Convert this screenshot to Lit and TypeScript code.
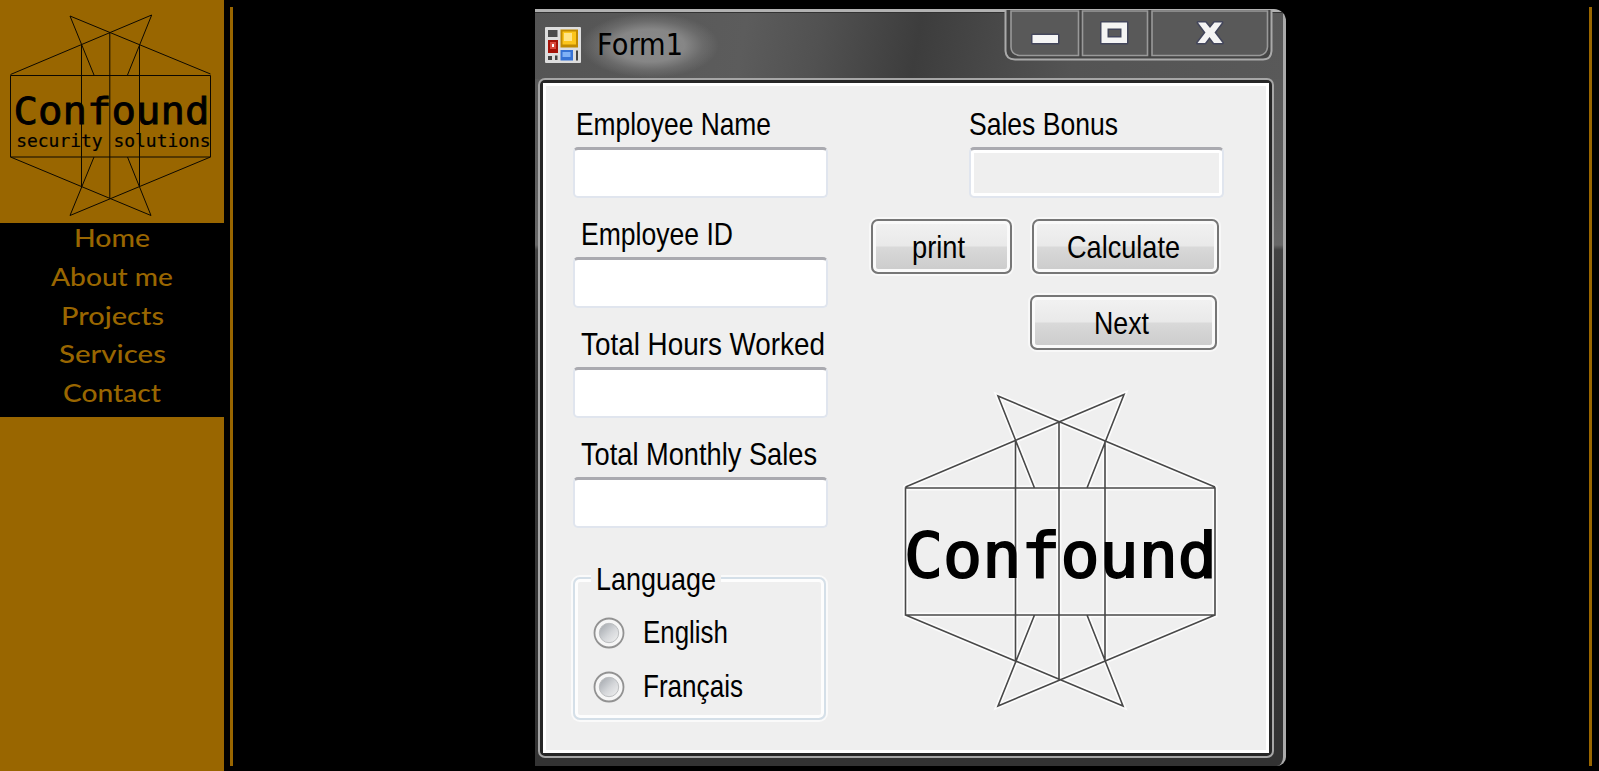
import { LitElement, html, css } from "lit";
import { customElement, property } from "lit/decorators.js";

/** One line of text stretched to a fixed advance width. */
@customElement("fit-text")
class FitText extends LitElement {
  @property() text = "";
  @property({ type: Number }) width = 100;
  @property({ type: Number }) height = 38.8;
  @property({ type: Number }) base = 23;

  static styles = css`
    :host { display: block; }
    svg { display: block; overflow: visible; }
    text { fill: currentColor; }
  `;

  render() {
    return html`<svg width=${this.width} height=${this.height}>
      <text x="0" y=${this.base} textLength=${this.width} lengthAdjust="spacingAndGlyphs">${this.text}</text>
    </svg>`;
  }
}

@customElement("side-bar")
class SideBar extends LitElement {
  static styles = css`
    :host { display: block; width: 224px; height: 771px; background: #996600; }
    .logo { display: block; }
    .line { fill: none; stroke: #0c0800; stroke-width: 1; }
    .word { font: 38px "DejaVu Sans Mono", monospace; stroke: #000; stroke-width: 0.8; }
    .tag { font: 17px "DejaVu Sans Mono", monospace; stroke: #000; stroke-width: 0.2; }
    nav { display: flex; flex-direction: column; align-items: center; height: 194px; background: #000; }
    a { display: block; color: #996600; text-decoration: none; font: 500 24.500px Lato, sans-serif; }
  `;

  links = [
    { name: "Home", width: 76 },
    { name: "About me", width: 122 },
    { name: "Projects", width: 103 },
    { name: "Services", width: 107 },
    { name: "Contact", width: 98 },
  ];

  render() {
    return html`
      <svg class="logo" width="224" height="223" viewBox="0 0 224 223">
        <path class="line" d="M10.5 75.5H210.5V157H10.5Z M81.5 45V187 M109.8 32.5V198.5 M139.5 45V187
          M94 75 70 16 210.5 74 M127.5 75 151.7 15 10.5 74.500 M94 157 70 215.500 210.500 157 M127.500 157 151 215.500 10.500 157" />
        <text class="word" x="13.500" y="124" textLength="196" lengthAdjust="spacingAndGlyphs">Confound</text>
        <text class="tag" x="16.200" y="147" textLength="194.500" lengthAdjust="spacingAndGlyphs">security solutions</text>
      </svg>
      <nav>
        ${this.links.map((l) => html`<a href="#"><fit-text .text=${l.name} .width=${l.width} .base=${23.5}></fit-text></a>`)}
      </nav>
    `;
  }
}

@customElement("form-window")
class FormWindow extends LitElement {
  static styles = css`
    :host {
      display: block; box-sizing: border-box; width: 751px; height: 759px; padding-top: 2px;
      background: #000; font: 31.500px "Liberation Sans", Arial, sans-serif; color: #000;
    }
    .frame {
      box-sizing: border-box; height: 757px; border-top: 3px solid #b2b2b2; border-right: 3px solid #aaa;
      border-radius: 0 12px 9px 0;
      background: linear-gradient(#575757 0, #5e5e5e 160px, #686868 233px, #424242 238px, #353535 380px, #333 100%);
    }
    .title {
      display: flex; height: 67px; align-items: flex-start; box-sizing: border-box;
      border-top: 1px solid #333;
      background: linear-gradient(100deg, #545454 0, #5c5c5c 28%, #515151 38%, #3d3d3d 51%, #474747 60%, #545454 72%, #595959 100%);
    }
    .icon { display: block; margin: 14px 0 0 10px; }
    .caption {
      margin: 0; padding: 15px 36px 16px 16px; width: 86px; height: 34px;
      font: 29.500px "DejaVu Sans", sans-serif;
      background: radial-gradient(closest-side, #8a8a8a 0, #868686 50%, rgba(118,118,118,0.6) 76%, rgba(90,90,90,0) 100%);
    }
    .controls { display: block; margin-left: auto; margin-right: 9px; margin-top: -3px; }
    .client {
      box-sizing: border-box; width: 736px; height: 680px; margin-left: 3px; margin-top: -1px;
      border: 2.500px solid #a6a6a6; border-radius: 7px; background: #262626; padding: 3px;
    }
    .body {
      display: flex; justify-content: space-between; box-sizing: border-box; height: 670px; width: 726px;
      border: 3px solid #fff; padding: 19px 41px 0 27px; background: #efefef;
    }
    .left { width: 255px; }
    .right { width: 354px; }
    .field { margin-bottom: 17px; width: 255px; }
    .field.bonus { margin-left: 98px; margin-bottom: 21px; }
    .label { display: block; padding-left: 3px; }
    .label.inset { padding-left: 8px; }
    .label.flush { padding-left: 0; }
    .box {
      display: block; box-sizing: border-box; width: 255px; height: 51px; border: 2px solid #e0e5ee;
      border-top: 3px solid #aaaab0; border-radius: 5px; background: #fff;
    }
    .box.locked { background: #efefef; box-shadow: inset 0 0 0 3px #fff; }
    .buttons { display: flex; justify-content: space-between; width: 348px; margin-bottom: 21px; }
    .btn {
      display: flex; justify-content: center; box-sizing: border-box; height: 55px; padding: 5px 0 0 0; width: 187px;
      border: 2.500px solid #767676; border-radius: 7px; box-shadow: inset 0 0 0 3px #fafafa, 0 0 0 2px #f8f8f8;
      background: linear-gradient(#f1f1f1 3px, #e9e9e9 49%, #d9d9d9 51%, #cbcbcb 100%);
    }
    .btn.small { width: 141px; padding-right: 7px; }
    .btn:nth-child(2) { padding-right: 5px; }
    .btn.next { margin-left: 159px; padding-right: 4px; }
    .mark { display: block; margin: 39px 0 0 24px; }
    .line { fill: none; stroke: #484848; stroke-width: 1.600; }
    .halo { fill: none; stroke: #fcfcfc; stroke-width: 5; }
    .word { font: 62px "DejaVu Sans Mono", monospace; stroke: #000; stroke-width: 1.800; }
    .group {
      box-sizing: border-box; width: 253px; height: 143px; margin-top: 49px; padding: 0 0 0 18px;
      border: 2px solid #d4dfe8; border-radius: 7px; box-shadow: inset 0 0 0 3px #fdfdfd, 0 0 0 2px #fafafa;
    }
    .legend { display: block; width: 120px; margin-top: -20px; padding: 0 5px 0 5px; margin-left: -2px; height: 40px; background: #efefef; }
    .choice { display: flex; align-items: center; gap: 18px; height: 54px; }
    .choices { margin-top: 7px; }
  `;

  field(name: string, width: number, kind = "inset") {
    return html`<div class="field">
      <fit-text class="label ${kind}" .text=${name} .width=${width} .height=${42} .base=${29.5}></fit-text>
      <span class="box"></span>
    </div>`;
  }

  choice(name: string, width: number) {
    return html`<div class="choice">
      <svg width="32" height="32" viewBox="0 0 32 32">
        <defs>
          <linearGradient id="dot" x1="0" y1="0" x2="1" y2="1">
            <stop offset="0.100" stop-color="#a9adb2" /><stop offset="0.550" stop-color="#d5d7da" /><stop offset="1" stop-color="#f2f2f2" />
          </linearGradient>
        </defs>
        <circle cx="16" cy="16" r="14.500" fill="#f6f6f6" stroke="#929292" stroke-width="1.800" />
        <circle cx="16" cy="16" r="9.700" fill="url(#dot)" stroke="#bcbec0" stroke-width="1" />
      </svg>
      <fit-text .text=${name} .width=${width} .height=${36} .base=${28}></fit-text>
    </div>`;
  }

  markLines = "M1.500 99H311V226H1.500Z M111.500 51V272 M155 33V291 M201 51V272 M130.500 99 94 7 311 98 M183 99 220 5.500 1.500 98 M130.500 226 94 317 311 226 M183 226 219 317 1.500 226";

  render() {
    return html`
      <div class="frame">
        <div class="title">
          <svg class="icon" width="36" height="36" viewBox="0 0 36 36">
            <rect width="36" height="36" rx="1" fill="#dedede" />
            <rect x="3" y="3" width="9.500" height="7" fill="#4b4b4b" />
            <rect x="3" y="13" width="10" height="13" fill="#a51208" />
            <path d="M5 15h6v7H5z" fill="#d94a3e" /><path d="M7 17h2v3H7z" fill="#fff" />
            <rect x="15.500" y="2.500" width="17.500" height="18" fill="#c18a00" />
            <rect x="17.500" y="4.500" width="13.500" height="13" fill="#fcc51b" />
            <path d="M19 6h8v8h-8z" fill="#ffe486" />
            <rect x="15.500" y="23" width="12.500" height="10.500" fill="#3672d5" />
            <path d="M17.500 25h8v5h-8z" fill="#80b1f6" />
            <path d="M3 29h4v4H3zM10 28.500h2.500v4.500H10zM31 23.500h2v10h-2z" fill="#454545" />
          </svg>
          <fit-text class="caption" .text=${"Form1"} .width=${86} .height=${34} .base=${27}></fit-text>
          <svg class="controls" width="270" height="53" viewBox="0 0 270 53">
            <path d="M1.500 0V41Q2 49.500 11 49.500H259Q267 49.500 267.500 41V0" fill="#444" stroke="#aaa" stroke-width="2" />
            <path d="M7 1H74.500V45.500H15Q7 44 7 37Z M78.500 1H143.500V45.500H78.500Z M148 1H263.500V37Q263 44 256 45.500H148Z" fill="#595959" stroke="#999" stroke-width="1.600" />
            <g stroke="#43465b" stroke-width="3" fill="#f4f4f4" paint-order="stroke" stroke-linejoin="round">
              <path d="M28.500 25H54V33H28.500Z" />
              <path fill-rule="evenodd" d="M97.500 12.500H123V33H97.500Z M103.500 18.500V27.500H117.500V18.500Z" />
              <path d="M194 12.500h7.500l4.500 5.500 4.500-5.500h7.500l-7.500 10 8 10.500h-8.500l-4.500-6-4.500 6h-7.500l8-10.500z" />
            </g>
          </svg>
        </div>
        <div class="client">
          <div class="body">
            <div class="left">
              ${this.field("Employee Name", 195, "first")}
              ${this.field("Employee ID", 152)}
              ${this.field("Total Hours Worked", 244)}
              ${this.field("Total Monthly Sales", 236)}
              <div class="group">
                <div class="legend"><fit-text .text=${"Language"} .width=${120} .height=${40} .base=${30.5}></fit-text></div>
                <div class="choices">
                  ${this.choice("English", 85)}
                  ${this.choice("Français", 100)}
                </div>
              </div>
            </div>
            <div class="right">
              <div class="field bonus">
                <fit-text class="label flush" .text=${"Sales Bonus"} .width=${149} .height=${42} .base=${29.5}></fit-text>
                <span class="box locked"></span>
              </div>
              <div class="buttons">
                <div class="btn small"><fit-text .text=${"print"} .width=${53} .height=${40} .base=${32}></fit-text></div>
                <div class="btn"><fit-text .text=${"Calculate"} .width=${113} .height=${40} .base=${32}></fit-text></div>
              </div>
              <div class="btn next"><fit-text .text=${"Next"} .width=${55} .height=${40} .base=${32}></fit-text></div>
              <svg class="mark" width="325" height="325" viewBox="-9 0 325 325">
                <path class="halo" d=${this.markLines} />
                <path class="line" d=${this.markLines} />
                <text class="word" x="0" y="187.500" textLength="313" lengthAdjust="spacingAndGlyphs">Confound</text>
              </svg>
            </div>
          </div>
        </div>
      </div>
    `;
  }
}

@customElement("app-root")
class AppRoot extends LitElement {
  static styles = css`
    :host { display: flex; box-sizing: border-box; width: 1599px; height: 771px; overflow: hidden; background: #000; }
    main {
      display: flex; box-sizing: border-box; width: 1362px; height: 759px; margin: 7px 0 0 6px; padding-left: 302px;
      border-left: 3px solid #996600; border-right: 3px solid #996600;
    }
  `;

  render() {
    return html`<side-bar></side-bar><main><form-window></form-window></main>`;
  }
}
